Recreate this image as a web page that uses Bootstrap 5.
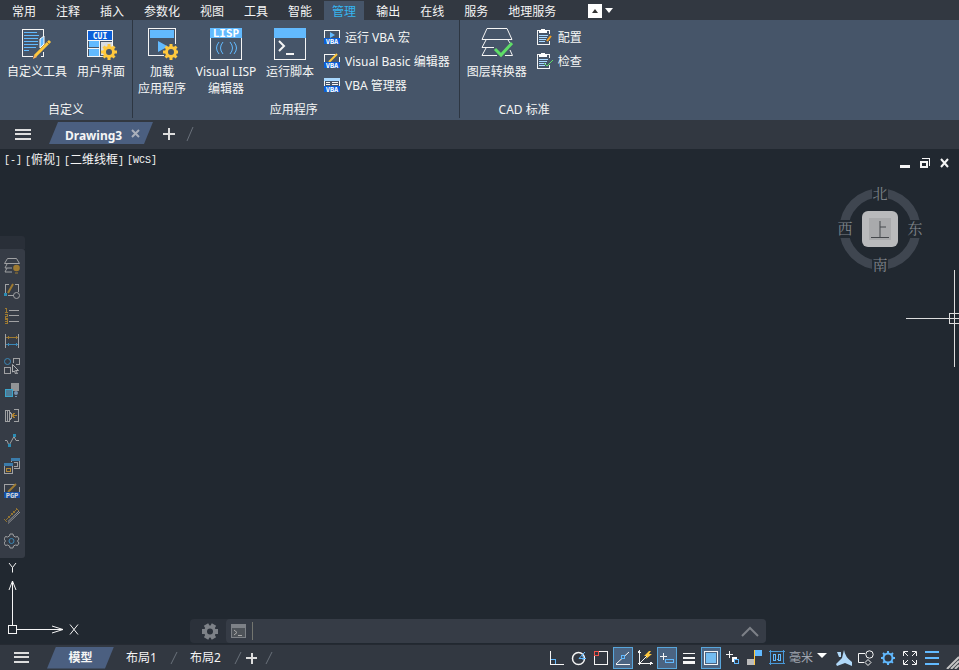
<!DOCTYPE html>
<html lang="zh-CN">
<head>
<meta charset="utf-8">
<meta name="viewport" content="width=device-width, initial-scale=1">
<title>Drawing3</title>
<link href="https://cdn.jsdelivr.net/npm/bootstrap@5.3.0/dist/css/bootstrap.min.css" rel="stylesheet">
<style>
body{font:12px/17px "Noto Sans","Noto Sans CJK SC",sans-serif;color:#f5f5f5;background:#212830}
svg{display:block;flex:none;fill:none;stroke:#f5f5f5;shape-rendering:crispEdges}
svg.soft,svg .soft{shape-rendering:geometricPrecision}
svg text{font-family:"DejaVu Sans Mono",monospace;font-weight:700;stroke:none;fill:#fff;text-anchor:middle}
button{background:none;border:0;padding:0;color:inherit;line-height:17px}
.bar-dark{background:#323841}
.menu-strip{height:20px;padding-left:2px}
.menu-strip .nav-link{color:#f5f5f5;padding:3px 8px 0;margin:1px 2px 0;line-height:16px}
.menu-strip .nav-link.active{background:#465569;color:#35b5f0}
.menu-toggle{margin-left:22px}
.ribbon{background:#465569;height:100px}
.rib-panel{border-right:1px solid #2d3642;height:98px;padding:5px 7px 0}
.rib-apps{padding-left:5px;padding-right:9px}
.rib-title{height:18px;line-height:20px}
.rib-items{gap:10px}
.big-btn{padding-top:3px;gap:3px}
.w-tool{width:60px}.w-four{width:48px}
.line-btn{height:24px;gap:5px}
.file-bar{height:29px}
.file-menu{margin-left:15px}
.tab-shape{background:#4b5f80;clip-path:polygon(9px 0,100% 0,calc(100% - 9px) 100%,0 100%)}
.file-tab{height:22px;width:104px;padding-left:16px;gap:9px;margin:2px 9px 0 18px;font-weight:700}
.view-label{top:4px;left:4px;gap:3px;font:10px/16px "Liberation Mono","Noto Sans CJK SC",monospace}
.view-label i{font-style:normal;font-size:12px}
.win-btns{top:9px;right:9px;gap:9px}
.compass{top:32px;right:36px}
.compass text{font:15px "Noto Serif CJK SC","Noto Sans CJK SC",serif;fill:#7f848a}
.tool-head{height:13px;background:#292f38;border-top-right-radius:3px}
.tool-body{width:25px;background:#363c46;padding:5px 0 4px;border-radius:0 3px 3px 0}
.tool-body button{height:25px;width:25px;padding-left:4px}
.tool-body svg{opacity:.8}
.cmd{width:calc(60% + 1px);height:24px;bottom:1px;left:calc(20% - 2px);background:#2b313a;border-radius:4px}
.cmd-field{background:#363c46;border-radius:4px;margin-left:36px;padding:0 7px 0 5px;gap:4px}
.cmd-field input{background:none;border:0;border-left:1px solid #73756f;height:18px;color:#f5f5f5;outline:0}
.status{height:26px;border-top:1px solid #252a32}
.model-tab{height:22px;width:67px}
.layout-tab{width:33px;margin-left:11px}
.slash{margin-left:12px}
.s-btn{width:22px;height:22px}
.s-btn.on{background:#4b6482;border:1px solid #58a6dc;width:20px;margin:0 1px}
.unit-sel{appearance:none;background:none;border:0;color:#a0a6b0;width:26px;padding:0 0 0 1px}
.z-over{pointer-events:none}
</style>
<script src="https://cdn.jsdelivr.net/npm/bootstrap@5.3.0/dist/js/bootstrap.bundle.min.js"></script>
</head>
<body class="d-flex flex-column vh-100 overflow-hidden">
<nav class="menu-strip bar-dark nav flex-nowrap flex-shrink-0 text-nowrap" aria-label="菜单">
<a class="nav-link" href="#">常用</a><a class="nav-link" href="#">注释</a><a class="nav-link" href="#">插入</a><a class="nav-link" href="#">参数化</a><a class="nav-link" href="#">视图</a><a class="nav-link" href="#">工具</a><a class="nav-link" href="#">智能</a><a class="nav-link active" href="#">管理</a><a class="nav-link" href="#">输出</a><a class="nav-link" href="#">在线</a><a class="nav-link" href="#">服务</a><a class="nav-link" href="#">地理服务</a>
<button class="menu-toggle" aria-label="最小化功能区"><svg width="26" height="20"><path d="M0 4h14v14H0z" fill="#fff" stroke="none"/><path class="soft" d="M4 13l3-4 3 4z" stroke="none" fill="#333"/><path class="soft" d="M17 8h8l-4 5z" fill="#fff" stroke="none"/></svg></button>
</nav>

<div class="ribbon d-flex flex-shrink-0 text-nowrap">
<section class="rib-panel d-flex flex-column">
 <div class="rib-items d-flex align-items-start flex-grow-1">
 <button class="big-btn w-tool d-flex flex-column align-items-center"><svg width="32" height="32" viewBox="2 0 32 32"><path d="M14 28.500H3.500v-27h21v6M24.500 24v4.500h-3"/><path d="M5 4.500h13M5 7.500h15M5 10.500h14M5 13.500h14M5 16.500h14M5 19.500h12M5 22.500h5" stroke="#62baff"/><path class="soft" d="M21 11l4-3v8l-4 4z" fill="#62baff" stroke="#fff"/><path class="soft" d="M16 28L31 13" stroke="#ffc83d" stroke-width="3"/><path class="soft" d="M28 14l2 2" stroke="#a0722c"/><path class="soft" d="M14 31l1-4 3 2z" fill="#ffb45c" stroke="none"/></svg>自定义工具</button>
 <button class="big-btn w-four d-flex flex-column align-items-center"><svg width="32" height="32"><path d="M2.500 2.500h25v26h-25z"/><path d="M3 3h24v9H3z" fill="#0b5fd8" stroke="none"/><path d="M4 13h10v6H4zM4 21h10v7H4z" fill="#62baff" stroke="none"/><path d="M3 12.500h24M14.500 12v16M3 20h12"/><path d="M16 14h11v13H16z" fill="#d8dce2" stroke="none"/><text x="15" y="11" font-size="8">CUI</text><g class="soft" stroke="#ffc83d"><circle cx="24" cy="24" r="4.500" stroke-width="3" fill="#465569"/><path d="M24 16v16M16 24h16M18.500 18.500l11 11M29.500 18.500l-11 11" stroke-width="3" stroke-dasharray="3 10 3 10"/></g></svg>用户界面</button>
 </div><div class="rib-title text-center">自定义</div>
</section>
<section class="rib-panel rib-apps d-flex flex-column">
 <div class="rib-items d-flex align-items-start flex-grow-1">
 <button class="big-btn w-four d-flex flex-column align-items-center"><svg width="32" height="32" viewBox="-2 0 32 32"><path d="M27 16V.5H.5v26.500h15"/><path d="M2 2h24v8H2z" fill="#62baff" stroke="none"/><path class="soft" d="M10 13l10 5.500L10 24z" fill="#62baff" stroke="none"/><circle cx="24" cy="24" r="6" fill="#465569" stroke="none"/><g class="soft" stroke="#ffc83d"><circle cx="23" cy="24" r="4.500" stroke-width="3"/><path d="M23 16v16M15 24h16M17.500 18.500l11 11M28.500 18.500l-11 11" stroke-width="3" stroke-dasharray="3 10 3 10"/></g></svg><span>加载<br>应用程序</span></button>
 <button class="big-btn w-tool d-flex flex-column align-items-center"><svg width="32" height="32"><path d="M.5.5h31v31H.5z"/><path d="M0 0h32v10H0z" fill="#62baff" stroke="none"/><text x="16" y="9" font-size="11">LISP</text><path class="soft" stroke="#62baff" d="M9 14q-5 6 0 12M13 14q-5 6 0 12M20 14q5 6 0 12M24 14q5 6 0 12"/></svg><span>Visual LISP<br>编辑器</span></button>
 <button class="big-btn w-four d-flex flex-column align-items-center"><svg width="32" height="32"><path d="M.5.5h31v31H.5z"/><path d="M0 0h32v10H0z" fill="#62baff" stroke="none"/><path class="soft" d="M5 13l5 5-5 5" stroke-width="2"/><path d="M12 26h8" stroke-width="2"/></svg>运行脚本</button>
 <div>
 <button class="line-btn d-flex align-items-center"><svg width="16" height="16"><path d="M.5 10V1.500h15V10"/><path class="soft" d="M6 3l5 3-5 3z" fill="#62baff" stroke="none"/><path d="M0 9h16v6H0z" fill="#0b5fd8" stroke="none"/><text x="8" y="15" font-size="7">VBA</text></svg>运行 VBA 宏</button>
 <button class="line-btn d-flex align-items-center"><svg width="16" height="16"><path d="M.5 10V1.500h10M15.500 4v6"/><path class="soft" d="M5 9l8-8" stroke="#ffc83d" stroke-width="2"/><path d="M0 9h16v6H0z" fill="#0b5fd8" stroke="none"/><text x="8" y="15" font-size="7">VBA</text></svg>Visual Basic 编辑器</button>
 <button class="line-btn d-flex align-items-center"><svg width="16" height="16"><path d="M.5 10V3M15.500 10V3M2 5.500h4M8 5.500h6M2 7.500h4M8 7.500h6"/><path d="M0 1h16v3H0z" fill="#a8d8ff" stroke="none"/><path d="M0 9h16v6H0z" fill="#0b5fd8" stroke="none"/><text x="8" y="15" font-size="7">VBA</text></svg>VBA 管理器</button>
 </div>
 </div><div class="rib-title text-center">应用程序</div>
</section>
<section class="rib-panel border-0 d-flex flex-column">
 <div class="rib-items d-flex align-items-start flex-grow-1">
 <button class="big-btn w-tool d-flex flex-column align-items-center"><svg class="soft" width="32" height="32"><path d="M6 .5h20l5 11H1zM5 12l-4 7.500h12M5 20l-4 7.500h15M29 22l2.500 5.500H24M27 12l2 3"/><path d="M14 21l6 6 11-12" stroke="#5fdd68" stroke-width="3"/></svg>图层转换器</button>
 <div>
 <button class="line-btn d-flex align-items-center"><svg width="16" height="16"><path d="M4 1.500H.5v14h12V12M9 1.500h3.500V5"/><path d="M2 1h8v3H2zM4 0h4v2H4z" fill="#fff" stroke="none"/><path d="M2 6.500h9M2 8.500h8M2 10.500h7M2 12.500h6" stroke="#a8d8ff"/><path class="soft" d="M10 12l4-5" stroke="#f6a021" stroke-width="2"/></svg>配置</button>
 <button class="line-btn d-flex align-items-center"><svg width="16" height="16"><path d="M4 1.500H.5v14h12V12M9 1.500h3.500V5"/><path d="M2 1h8v3H2zM4 0h4v2H4z" fill="#fff" stroke="none"/><path d="M2 6.500h9M2 8.500h8M2 10.500h7M2 12.500h6" stroke="#a8d8ff"/><path class="soft" d="M7 10l3 3 6-6" stroke="#5fdd68"/></svg>检查</button>
 </div>
 </div><div class="rib-title text-center">CAD 标准</div>
</section>
</div>

<div class="file-bar bar-dark d-flex align-items-start flex-shrink-0">
<button class="file-menu" aria-label="菜单"><svg width="16" height="28"><path d="M0 10h16M0 14h16M0 19h16" stroke="#ddd" stroke-width="2"/></svg></button>
<div class="file-tab tab-shape d-flex align-items-center"><span class="pt-1">Drawing3</span><button aria-label="关闭"><svg class="soft" width="9" height="9"><path d="M1 1l7 7M8 1l-7 7" stroke="#aab0bb" stroke-width="2"/></svg></button></div>
<button aria-label="新建"><svg width="32" height="28"><path d="M1 14h12M7 8v12" stroke="#ddd" stroke-width="2"/><path class="soft" d="M25 21l6-14" stroke="#69707a"/></svg></button>
</div>

<main class="position-relative flex-grow-1 d-flex align-items-center overflow-hidden">
<div class="view-label position-absolute d-flex"><span>[-]</span><span>[<i>俯视</i>]</span><span>[<i>二维线框</i>]</span><span>[WCS]</span></div>
<div class="win-btns position-absolute d-flex">
<button aria-label="最小化"><svg width="11" height="11"><path d="M0 8.500h10" stroke-width="3"/></svg></button>
<button aria-label="还原"><svg width="11" height="11"><path d="M1 4h6v5H1z" stroke-width="2"/><path d="M2 .5h7.500V8"/></svg></button>
<button aria-label="关闭"><svg class="soft" width="10" height="11"><path d="M1 1l7 8M8 1l-7 8" stroke-width="2"/></svg></button>
</div>
<svg class="compass soft position-absolute" width="86" height="96" viewBox="837 181 86 96"><circle cx="880" cy="229" r="36" stroke="#3f4650" stroke-width="9"/><path d="M872 186h16v17h-16zM872 256h16v17h-16zM838 220h16v18h-16zM906 220h17v18h-17z" fill="#212830" stroke="none"/><text x="880" y="199">北</text><text x="880" y="270">南</text><text x="845" y="234">西</text><text x="915" y="234">东</text><rect x="862" y="211" width="36" height="36" rx="6" fill="#b9babc" stroke="none"/><path d="M869 218h22v22h-22z" fill="#a9aaac" stroke="none"/><path d="M880 221v17M880 227h6M871 237.500h18" stroke="#45484c"/></svg>
<svg class="position-absolute end-0 top-0" width="54" height="220" viewBox="905 149 54 220"><path d="M906 318.500h43M954.500 270v43M954.500 324v43M949.500 313.500h10v10h-10zM950 318.500h9M954.500 314v9" stroke="#ddd"/></svg>
<svg class="position-absolute start-0 bottom-0" width="84" height="84" viewBox="0 560 84 84"><path d="M8.500 625.500h8v8h-8zM12.500 625v-44M17 629.500h46"/><path class="soft" d="M9 590l3.500-9 3.500 9M52 626l11 3.500-11 3.500M9 563l3.500 4.500 3.500-4.500M12.500 567.500v5M70 624.500l8 10M78 624.500l-8 10"/></svg>

<div class="tool-rail">
<div class="tool-head"></div>
<div class="tool-body d-flex flex-column">
<button aria-label="图层"><svg class="soft" width="17" height="16"><path d="M3.500.5h9l3 5H.5zM3 6l-2 4h7M3 10l-2 4h7" stroke="#bbb"/><circle cx="12.500" cy="10" r="3.300" fill="#b88a2d" stroke="none"/><path d="M11 15h3" stroke="#b88a2d"/></svg></button>
<button aria-label="编辑"><svg width="17" height="16"><path d="M5 1.500H1v10M11 1.500h3V9M4 12.500h6" stroke="#bbb"/><path class="soft" d="M4 10l5-9" stroke="#b88a2d" stroke-width="2"/><path d="M0 10h3v3H0z" fill="#2aa0cf" stroke="none"/><circle class="soft" cx="12.500" cy="12.500" r="3" stroke="#bbb"/></svg></button>
<button aria-label="编号"><svg width="17" height="16"><path d="M5 2.500h10M5 7.500h10M5 13.500h10" stroke="#bbb"/><path d="M1 .5h1.500V4M1 4.500h3M1 6h2.500v2H1v2h3M1 11.500h2.500v4H1M1 13.500h2" stroke="#b88a2d"/></svg></button>
<button aria-label="标注"><svg width="17" height="16"><path d="M1.500 1v14M14.500 1v14" stroke="#bbb"/><path d="M2 4.500h12M4 3v3M12 3v3" stroke="#b88a2d"/><path d="M2 11.500h12M4 10v3M12 10v3" stroke="#3e9bd2"/></svg></button>
<button aria-label="选择"><svg width="17" height="16"><circle class="soft" cx="3.500" cy="3.500" r="3" stroke="#3e9bd2"/><path d="M9.500 5V.5h6v6H12M.5 9.500h6v6h-6z" stroke="#bbb"/><path class="soft" d="M8.500 6.500l6 6h-3l2 3-2 .5-1-3-2 1z" stroke="#ccc"/></svg></button>
<button aria-label="块"><svg width="17" height="16"><path d="M7 0h8v8H7z" fill="#aaa" stroke="none"/><path d="M1.500 6.500h7v7h-7z" stroke="#3ec0ed" fill="#548cac"/><circle class="soft" cx="12" cy="10" r="2" fill="#86a9cc" stroke="none"/><path d="M11 13.500h2" stroke="#86a9cc"/></svg></button>
<button aria-label="对齐"><svg width="17" height="16"><path d="M1.500 2v12M3.500 2v12M1 2.500h4l2 3v5l-2 3H1M5.500 3v10M10 1.500h4.500v12H10" stroke="#bbb"/><path d="M8 7.500h5M8.500 7l2-2M8.500 8l2 2" stroke="#c8902b"/></svg></button>
<button aria-label="曲线"><svg class="soft" width="17" height="16"><path d="M1 7.500h2l2 5 5-9 2 4h3" stroke="#bbb"/><path d="M4 11h3v3H4zM9 1h3v3H9z" fill="#2aa0cf" stroke="none"/></svg></button>
<button aria-label="视口"><svg width="17" height="16"><path d="M7.500 4V1.500h8v9H10M.5 7v8.500h8V7" stroke="#bbb"/><path d="M7 1h9M0 6.500h9" stroke="#3d8dc5" stroke-width="3"/><path d="M2.500 10.500h4v3h-4z" stroke="#d39b31"/><path d="M10 4.500h3v4h-3" stroke="#bbb"/></svg></button>
<button aria-label="PGP"><svg width="17" height="16"><path d="M.5 10V1.500h10M15.500 4v6" stroke="#bbb"/><path class="soft" d="M4 9l8-8" stroke="#b88a2d" stroke-width="2"/><path d="M0 9h16v6H0z" fill="#0f55bd" stroke="none"/><text x="8" y="15" font-size="7">PGP</text></svg></button>
<button aria-label="测量"><svg class="soft" width="17" height="16"><path d="M1 13L13 1M0 11l3 3M4 8l2 2M7 5l2 2M9 3l2 2M12 0l3 3" stroke="#a8812f"/><path d="M4 15.500L16 4M4 13.500L15 3" stroke="#aaa"/></svg></button>
<button aria-label="设置"><svg class="soft" width="17" height="16"><path d="M6 1h3l.5 2 2 1 2-.5 1.500 2.500-1.500 2 1.500 2-1.500 2.500-2-.5-2 1L9 15H6l-.5-2-2-1-2 .5L0 10l1.500-2L0 6l1.500-2.500 2 .5 2-1z" stroke="#bbb"/><circle cx="7.500" cy="8" r="2.500" stroke="#3e9bd2"/></svg></button>
</div>
</div>

<div class="cmd position-absolute d-flex">
<button class="position-absolute" aria-label="自定义"><svg class="soft" width="36" height="24"><circle cx="20" cy="12.500" r="4.500" stroke="#7d8187" stroke-width="3"/><path d="M16 5.500l8 14M24 5.500l-8 14M12 12.500h16" stroke="#7d8187" stroke-width="5" stroke-dasharray="4 8 4"/></svg></button>
<div class="cmd-field d-flex flex-grow-1 align-items-center"><svg width="17" height="16"><path d="M.5 1.500h14v13H.5z" fill="#4e5359" stroke="#7d8187"/><path d="M0 3h15" stroke="#7d8187" stroke-width="3"/><path class="soft" d="M3 7l3 2.500L3 12M7 12.500h4" stroke="#aaa"/></svg><input class="flex-grow-1" type="text" aria-label="命令"><button aria-label="展开"><svg class="soft" width="18" height="12"><path d="M1 11l8-8 8 8" stroke="#7d8187" stroke-width="2"/></svg></button></div>
</div>
</main>

<footer class="status bar-dark d-flex flex-shrink-0 align-items-center text-nowrap">
<button aria-label="布局菜单"><svg width="47" height="24"><path d="M14 7h15M14 11h15M14 16h15" stroke="#ddd" stroke-width="2"/></svg></button>
<button class="model-tab tab-shape fw-bold">模型</button>
<button class="layout-tab">布局1</button>
<svg class="soft slash" width="8" height="14"><path d="M1 13L7 1" stroke="#69707a"/></svg>
<button class="layout-tab">布局2</button>
<svg class="soft slash" width="8" height="14"><path d="M1 13L7 1" stroke="#69707a"/></svg>
<button aria-label="新建布局"><svg width="32" height="14"><path d="M4 7h11M10 2v11" stroke="#ddd" stroke-width="2"/><path class="soft" d="M24 13L30 1" stroke="#69707a"/></svg></button>
<div class="d-flex align-items-center ms-auto">
<button class="s-btn d-flex align-items-center justify-content-center" aria-label="正交"><svg width="16" height="16"><path d="M1.500 1v13.500H15"/><path d="M2 9.500h4.500V14" stroke="#62baff"/></svg></button>
<button class="s-btn d-flex align-items-center justify-content-center" aria-label="极轴"><svg class="soft" width="16" height="16"><circle cx="7.500" cy="8.500" r="6" stroke-width="1.500"/><path d="M8 8.500h7M8 8.500L14 2M11 5q2 2 1 5" stroke="#62baff"/></svg></button>
<button class="s-btn d-flex align-items-center justify-content-center" aria-label="捕捉"><svg width="16" height="16"><path d="M6 1.500h8.500v13h-13V6"/><path d="M1.500 1.500h4v4h-4z" stroke="#f0524a"/></svg></button>
<button class="s-btn on d-flex align-items-center justify-content-center" aria-label="追踪"><svg width="16" height="16"><path d="M1 14.500h14"/><path class="soft" d="M1 14L14 2"/><path d="M6.500 5.500h3v3h-3z" stroke="#62baff" fill="#4b6482"/></svg></button>
<button class="s-btn d-flex align-items-center justify-content-center" aria-label="动态坐标"><svg width="16" height="16"><path d="M2.500 1v14M1 13.500h14M1 3l1.500-2L4 3M13 12l2 1.500-2 1.500M3 13l7-7"/><path class="soft" d="M12 1L7 6h3L9 9l6-5h-3l2-3z" fill="#ffc83d" stroke="none"/></svg></button>
<button class="s-btn on d-flex align-items-center justify-content-center" aria-label="动态输入"><svg width="16" height="16"><path d="M1 6.500h7M4.500 3v7"/><path d="M6.500 9.500h8v3h-8z" stroke="#62baff"/></svg></button>
<button class="s-btn d-flex align-items-center justify-content-center" aria-label="线宽"><svg width="14" height="14"><path d="M1 2.500h12"/><path d="M1 7h12" stroke-width="2"/><path d="M1 11.500h12" stroke-width="3"/></svg></button>
<button class="s-btn on d-flex align-items-center justify-content-center" aria-label="透明度"><svg width="16" height="16"><path d="M1.500 1.500h13v13h-13z"/><path d="M3 3h10v10H3z" fill="#74bdf2" stroke="none"/></svg></button>
<button class="s-btn d-flex align-items-center justify-content-center" aria-label="循环选择"><svg width="16" height="16"><path d="M1 4.500h7M4.500 1v7"/><path d="M7 7h5v5H7z" fill="#fff" stroke="none"/><path d="M9.500 9.500h4v4h-4z" stroke="#62baff" fill="#323841"/></svg></button>
<button class="s-btn d-flex align-items-center justify-content-center" aria-label="注释"><svg width="16" height="16"><path d="M0 9h7v6H0z" fill="#bbb" stroke="none"/><path d="M8 0h7v6H8z" fill="#62baff" stroke="none"/><path d="M7.500 0v15" stroke="#ffc83d"/></svg></button>
<button class="s-btn d-flex align-items-center justify-content-center" aria-label="单位"><svg width="16" height="16"><path d="M1.500 0v15M14.500 0v13M0 1.500h16M0 13.500h16" stroke="#4898d8"/><path d="M4.500 4.500h2v6h-2zM9.500 4.500h2v6h-2zM8 9v1" stroke="#62baff"/></svg></button>
<select class="unit-sel" aria-label="单位"><option>毫米</option></select>
<svg class="soft z-over" width="19" height="20"><path d="M3 5h10l-5 5z" fill="#fff" stroke="none"/></svg>
<button class="s-btn d-flex align-items-center justify-content-center" aria-label="注释监视"><svg class="soft" width="16" height="16"><path d="M8 0q1 7 8 12v4l-7-3-8 3-1-2 6-6zM1 2h4v5H3z" fill="#b0d8f8" stroke="none"/></svg></button>
<button class="s-btn d-flex align-items-center justify-content-center" aria-label="隔离"><svg class="soft" width="16" height="16"><path d="M7 3.500H.5v9H6"/><circle cx="11.500" cy="4.500" r="3.700"/><path d="M10 9.500l3 3-3 3-3-3z"/></svg></button>
<button class="s-btn d-flex align-items-center justify-content-center" aria-label="设置"><svg class="soft" width="16" height="16"><g stroke="#62baff"><circle cx="8" cy="8" r="4.500" stroke-width="2"/><path d="M8 1v14M1 8h14M3 3l10 10M13 3L3 13" stroke-width="2" stroke-dasharray="3 8 3 8"/></g></svg></button>
<button class="s-btn d-flex align-items-center justify-content-center" aria-label="全屏"><svg class="soft" width="16" height="16"><path d="M6 1.500H1.500V6M10 1.500h4.500V6M6 14.500H1.500V10M10 14.500h4.500V10M2 2l4 4M14 2l-4 4M2 14l4-4M14 14l-4-4"/></svg></button>
<button class="s-btn d-flex align-items-center justify-content-center" aria-label="自定义"><svg width="16" height="16"><path d="M1 2h14M1 8h14M1 14h14" stroke="#62baff" stroke-width="2"/></svg></button>
<svg class="soft align-self-end" width="16" height="17"><path d="M4 17L16 5M8 17l8-8M12 17l4-4" stroke="#c4c4c4" stroke-width="2"/></svg>
</div>
</footer>
</body>
</html>
